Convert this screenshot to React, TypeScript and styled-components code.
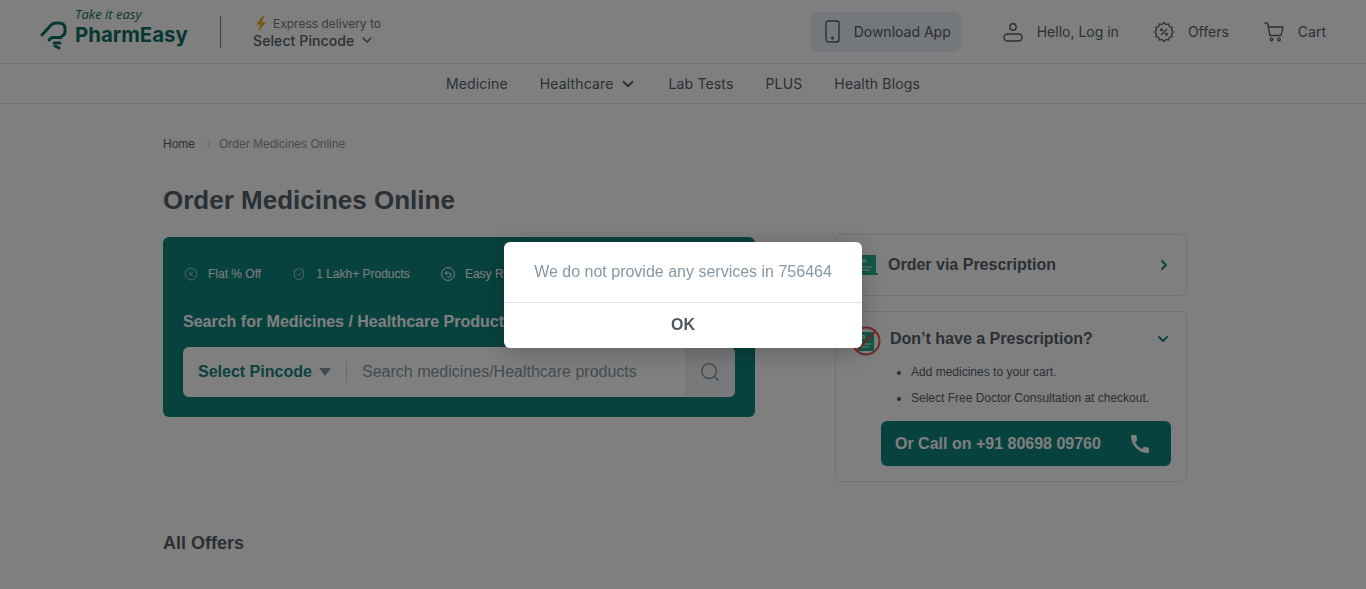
import {ChevronDown, ChevronRight, Search, ShieldCheck, CircleX} from "lucide-react";
import {MdCall} from "react-icons/md";
import styled, {createGlobalStyle} from "styled-components";

const navItems = ["Medicine", "Healthcare", "Lab Tests", "PLUS", "Health Blogs"];

// 12 scallops round the offers badge
const badgePoints = Array.from({length: 24}, (_, i) => {
    const r = i % 2 === 0 ? 9.5 : 7.6;
    const a = (i * Math.PI) / 12;
    return `${(10 + r * Math.sin(a)).toFixed(2)},${(10 - r * Math.cos(a)).toFixed(2)}`;
}).join(" ");

function LogoMark() {
    return <MarkSvg width="27" height="29" viewBox="0 0 27 29" fill="none" stroke="#0f6f66" strokeWidth="3" strokeLinecap="round" strokeLinejoin="round">
        <path d="M2 14 L11 4 Q13 2 16 2 H19 Q25 2 25 8 V11 Q25 14 22 15"/>
        <path d="M9 19 L12 16.5 H21"/>
        <path d="M14 22 H20"/>
        <path d="M15 25 L19 27"/>
    </MarkSvg>
}

function PhoneIcon() {
    return <svg width="15" height="23" viewBox="0 0 15 23" fill="none" stroke="#566069" strokeWidth="1.4">
        <rect x="1" y="1" width="13" height="21" rx="2.5"/>
        <circle cx="7.5" cy="18" r="0.8" fill="#566069"/>
    </svg>
}

function UserIcon() {
    return <svg width="20" height="20" viewBox="0 0 20 20" fill="none" stroke="#566069" strokeWidth="1.4">
        <circle cx="10" cy="5" r="3.2"/>
        <rect x="1" y="12" width="18" height="7" rx="3.5"/>
    </svg>
}

function OfferIcon() {
    return <svg width="20" height="20" viewBox="0 0 20 20" fill="none" stroke="#566069" strokeWidth="1.2" strokeLinejoin="round">
        <polygon points={badgePoints}/>
        <path d="M12.8 7 L7.2 13"/>
        <circle cx="7.6" cy="7.8" r="1"/>
        <circle cx="12.4" cy="12.2" r="1"/>
    </svg>
}

function CartIcon() {
    return <svg width="20" height="20" viewBox="0 0 20 20" fill="none" stroke="#566069" strokeWidth="1.3" strokeLinecap="round" strokeLinejoin="round">
        <path d="M1 1 H3.5 L6 13.5 H17 L19 5 H4.5"/>
        <circle cx="7.5" cy="17.5" r="1.3"/>
        <circle cx="15" cy="17.5" r="1.3"/>
    </svg>
}

function BoltIcon() {
    return <svg width="12" height="16" viewBox="0 0 12 16" fill="#f0b32e">
        <path d="M7.5 0 L1 8.5 H5 L3 16 L11 6 H6.5 L9.5 0 Z"/>
    </svg>
}

function ReturnIcon() {
    return <svg width="14" height="14" viewBox="0 0 14 14" fill="none" stroke="currentColor" strokeWidth="1">
        <circle cx="7" cy="7" r="6.4"/>
        <path d="M4.5 6 H8 Q10 6 10 8 Q10 10 8 10 H6.5 M6 4 L4.2 6 L6 8"/>
    </svg>
}

function PrescriptionIcon() {
    return <svg width="20" height="20" viewBox="0 0 20 20">
        <rect x="1" y="0" width="17" height="19" fill="#26b38f"/>
        <rect x="0" y="18" width="20" height="2" fill="#26b38f"/>
        <text x="4" y="8" fontSize="6" fontWeight="700" fontFamily="Liberation Sans, sans-serif" fill="#fff">R</text>
        <path d="M4 12 H14 M4 15 H12" stroke="#fff" strokeWidth="1"/>
    </svg>
}

function NoPrescriptionIcon() {
    return <NoRxSvg width="30" height="30" viewBox="0 0 30 30">
        <rect x="7" y="6" width="16" height="19" fill="#26b38f"/>
        <text x="10" y="13" fontSize="6" fontWeight="700" fontFamily="Liberation Sans, sans-serif" fill="#fff">R</text>
        <path d="M10 18 H20 M10 21 H18" stroke="#fff" strokeWidth="1"/>
        <circle cx="15" cy="15" r="13.5" fill="none" stroke="#ef5350" strokeWidth="2"/>
        <path d="M25 5 L5 25" stroke="#ef5350" strokeWidth="2"/>
    </NoRxSvg>
}

export default function App() {
    return <>
        <GlobalStyle/>
        <Page>
            <Header>
                <Logo>
                    <LogoMark/>
                    <LogoWords>
                        <Tagline>Take it easy</Tagline>
                        <Brand>PharmEasy</Brand>
                    </LogoWords>
                </Logo>
                <Divider/>
                <Delivery>
                    <Express><BoltIcon/>Express delivery to</Express>
                    <Pincode>Select Pincode <ChevronDown size={16} strokeWidth={2}/></Pincode>
                </Delivery>
                <HeaderLinks>
                    <AppButton><PhoneIcon/>Download App</AppButton>
                    <HeaderLink><UserIcon/>Hello, Log in</HeaderLink>
                    <HeaderLink><OfferIcon/>Offers</HeaderLink>
                    <HeaderLink><CartIcon/>Cart</HeaderLink>
                </HeaderLinks>
            </Header>
            <Nav>
                {navItems.map(item => <NavItem key={item}>
                    {item}
                    {item === "Healthcare" && <ChevronDown size={18} strokeWidth={2.4}/>}
                </NavItem>)}
            </Nav>
            <Main>
                <Breadcrumb>
                    <Crumb>Home</Crumb>
                    <ChevronRight size={12} strokeWidth={1.5}/>
                    <Crumb $muted>Order Medicines Online</Crumb>
                </Breadcrumb>
                <Title>Order Medicines Online</Title>
                <Columns>
                    <SearchCard>
                        <Perks>
                            <Perk><CircleX size={14} strokeWidth={1} strokeDasharray="2 1"/>Flat % Off</Perk>
                            <Perk><ShieldCheck size={14} strokeWidth={1.1}/>1 Lakh+ Products</Perk>
                            <Perk><ReturnIcon/>Easy Returns</Perk>
                        </Perks>
                        <SearchTitle>Search for Medicines / Healthcare Products</SearchTitle>
                        <SearchBar>
                            <PinSelect>Select Pincode<Caret/></PinSelect>
                            <SearchText>Search medicines/Healthcare products</SearchText>
                            <SearchButton><Search size={22} strokeWidth={1.2}/></SearchButton>
                        </SearchBar>
                    </SearchCard>
                    <Side>
                        <OrderCard>
                            <PrescriptionIcon/>
                            <CardTitle>Order via Prescription</CardTitle>
                            <ChevronRight size={16} strokeWidth={2.8} color="#10847e"/>
                        </OrderCard>
                        <HelpCard>
                            <HelpHead>
                                <NoPrescriptionIcon/>
                                <CardTitle>Don’t have a Prescription?</CardTitle>
                                <ChevronDown size={16} strokeWidth={2.8} color="#10847e"/>
                            </HelpHead>
                            <Steps>
                                <li>Add medicines to your cart.</li>
                                <li>Select Free Doctor Consultation at checkout.</li>
                            </Steps>
                            <CallButton>Or Call on +91 80698 09760<MdCall size={24}/></CallButton>
                        </HelpCard>
                    </Side>
                </Columns>
                <OffersTitle>All Offers</OffersTitle>
            </Main>
        </Page>
        <Scrim>
            <Dialog>
                <Message>We do not provide any services in 756464</Message>
                <OkButton>OK</OkButton>
            </Dialog>
        </Scrim>
    </>
}

const GlobalStyle = createGlobalStyle`
  html, body {
    margin: 0;
    height: 100%;
    overflow: hidden;
    background: #fff;
  }
  * {
    box-sizing: border-box;
  }
`

const Page = styled.div`
  font-family: "Liberation Sans", Arial, sans-serif;
  color: #566069;
`

const Header = styled.header`
  height: 64px;
  padding: 0 40px;
  display: flex;
  align-items: center;
  border-bottom: 1px solid #dfe3e6;
  font-family: Inter, sans-serif;
`

const Logo = styled.div`
  flex: none;
  width: 148px;
  padding-bottom: 10px;
  display: flex;
  align-items: center;
  gap: 8px;
`

const MarkSvg = styled.svg`
  flex: none;
  margin-top: 18px;
`

const LogoWords = styled.div`
  display: flex;
  flex-direction: column;
  white-space: nowrap;
`

const Tagline = styled.span`
  margin-bottom: 2px;
  font-family: "Open Sans", sans-serif;
  font-style: italic;
  font-size: 13px;
  line-height: 14px;
  color: #0f6f66;
`

const Brand = styled.span`
  font-size: 20.4px;
  line-height: 24px;
  font-weight: 700;
  color: #0f6f66;
`

const Divider = styled.div`
  width: 1px;
  height: 32px;
  margin: 0 32px;
  background: #6e7a84;
`

const Delivery = styled.div`
  display: flex;
  flex-direction: column;
`

const Express = styled.div`
  display: flex;
  align-items: center;
  gap: 6px;
  padding: 1px 0 0 2px;
  font-size: 12px;
  line-height: 16px;
  color: #6e7a84;
`

const Pincode = styled.div`
  display: flex;
  align-items: center;
  gap: 5px;
  font-size: 14px;
  line-height: 17px;
  font-weight: 500;
  letter-spacing: 0.1px;
`

const HeaderLinks = styled.div`
  margin-left: auto;
  display: flex;
  align-items: center;
  gap: 35px;
  font-size: 14px;
`

const HeaderLink = styled.div`
  display: flex;
  align-items: center;
  gap: 14px;
`

const AppButton = styled(HeaderLink)`
  width: 150px;
  height: 40px;
  margin-right: 7px;
  padding-left: 14px;
  border-radius: 8px;
  background: #e8eff7;
`

const Nav = styled.nav`
  height: 40px;
  display: flex;
  justify-content: center;
  align-items: center;
  gap: 32px;
  border-bottom: 1px solid #dfe3e6;
  font-family: Inter, sans-serif;
  font-size: 14px;
  letter-spacing: 0.15px;
`

const NavItem = styled.div`
  display: flex;
  align-items: center;
  gap: 5px;
`

const Main = styled.main`
  width: 1024px;
  margin-left: 163px;
`

const Breadcrumb = styled.div`
  display: flex;
  align-items: center;
  gap: 4px;
  padding-top: 33px;
  height: 47px;
  font-size: 12px;
  color: #8897a2;
`

const Crumb = styled.span<{$muted?: boolean}>`
  margin-right: ${p => p.$muted ? "0" : "4px"};
  color: ${p => p.$muted ? "#8897a2" : "#566069"};
`

const Title = styled.h1`
  margin: 33px 0 0;
  font-size: 26px;
  line-height: 32px;
  font-weight: 700;
`

const Columns = styled.div`
  margin-top: 18px;
  display: grid;
  grid-template-columns: 592px 352px;
  justify-content: space-between;
  align-items: start;
`

const SearchCard = styled.section`
  margin-top: 3px;
  height: 180px;
  padding: 29px 20px 20px;
  border-radius: 6px;
  background: #10847e;
  color: #fff;
`

const Perks = styled.div`
  display: flex;
  gap: 31px;
  padding-left: 1px;
  font-size: 12px;
  line-height: 16px;
`

const Perk = styled.div`
  display: flex;
  align-items: center;
  gap: 10px;
`

const SearchTitle = styled.h2`
  margin: 31px 0 0;
  font-size: 16px;
  line-height: 18px;
  font-weight: 700;
`

const SearchBar = styled.div`
  margin-top: 16px;
  height: 50px;
  display: flex;
  align-items: center;
  border-radius: 6px;
  overflow: hidden;
  background: #fff;
`

const PinSelect = styled.div`
  width: 164px;
  height: 22px;
  padding-left: 15px;
  display: flex;
  align-items: center;
  gap: 7px;
  border-right: 1px solid #c9d0d6;
  font-size: 16px;
  font-weight: 700;
  color: #10847e;
`

const Caret = styled.span`
  border-left: 6px solid transparent;
  border-right: 6px solid transparent;
  border-top: 8px solid #8897a2;
`

const SearchText = styled.div`
  flex: 1;
  padding-left: 15px;
  font-size: 16px;
  color: #8897a2;
`

const SearchButton = styled.div`
  width: 50px;
  height: 50px;
  display: flex;
  justify-content: center;
  align-items: center;
  background: #f0f2f5;
  color: #6e7a84;
`

const Side = styled.aside`
  display: flex;
  flex-direction: column;
  gap: 15px;
`

const OrderCard = styled.div`
  height: 62px;
  padding: 0 14px 0 22px;
  display: flex;
  align-items: center;
  gap: 10px;
  border: 1px solid #dfe3e6;
  border-radius: 6px;
`

const CardTitle = styled.h3`
  flex: 1;
  margin: 0;
  font-size: 16px;
  font-weight: 700;
`

const HelpCard = styled.div`
  height: 171px;
  padding: 10px 15px 0 15px;
  border: 1px solid #dfe3e6;
  border-radius: 6px;
`

const HelpHead = styled.div`
  display: flex;
  align-items: center;
  gap: 9px;
`

const NoRxSvg = styled.svg`
  flex: none;
  margin-top: 4px;
`

const Steps = styled.ul`
  margin: 9px 0 0;
  padding-left: 60px;
  font-size: 12px;
  line-height: 14px;

  li {
    margin-bottom: 12px;
  }
`

const CallButton = styled.div`
  margin: 16px 0 0 30px;
  width: 290px;
  height: 45px;
  padding: 0 19px 0 14px;
  display: flex;
  justify-content: space-between;
  align-items: center;
  border-radius: 6px;
  background: #10847e;
  color: #fff;
  font-size: 16px;
  font-weight: 700;
`

const OffersTitle = styled.h2`
  margin: 51px 0 0;
  font-size: 18px;
  line-height: 20px;
  font-weight: 700;
`

const Scrim = styled.div`
  position: fixed;
  inset: 0;
  display: flex;
  justify-content: center;
  align-items: center;
  background: rgba(0, 0, 0, 0.5);
  font-family: "Liberation Sans", Arial, sans-serif;
`

const Dialog = styled.div`
  width: 358px;
  height: 106px;
  border-radius: 6px;
  background: #fff;
  box-shadow: 0 4px 24px rgba(0, 0, 0, 0.25);
`

const Message = styled.div`
  height: 61px;
  display: flex;
  justify-content: center;
  align-items: center;
  border-bottom: 1px solid #e3e6e9;
  font-size: 16px;
  color: #8897a2;
`

const OkButton = styled.div`
  height: 45px;
  display: flex;
  justify-content: center;
  align-items: center;
  font-size: 16px;
  font-weight: 700;
  color: #4f585e;
`
